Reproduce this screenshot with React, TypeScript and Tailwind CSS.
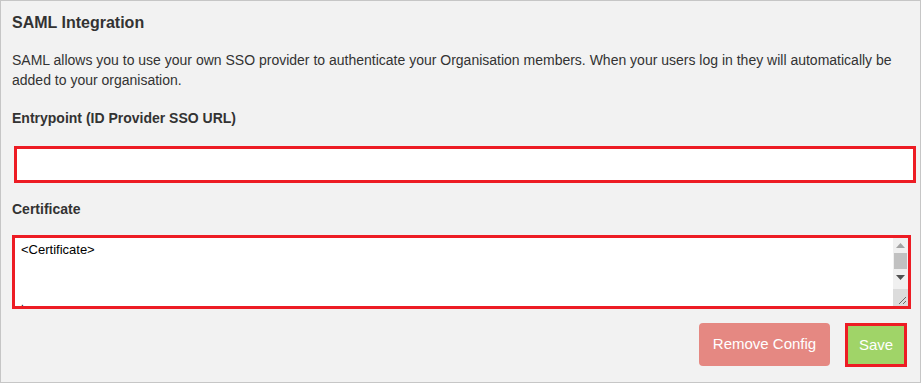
import React from "react";

function Scrollbar() {
  return (
    <div className="flex w-[15px] flex-col bg-[#f0f0f0]">
      <div className="flex h-[15px] items-center justify-center">
        <svg width="9" height="5" viewBox="0 0 9 5">
          <path d="M0 5 L4.5 0 L9 5 Z" fill="#a3a3a3" />
        </svg>
      </div>
      <div className="mx-[1px] h-[16px] bg-[#c1c1c1]" />
      <div className="flex h-[17px] items-center justify-center">
        <svg width="9" height="5" viewBox="0 0 9 5">
          <path d="M0 0 L9 0 L4.5 5 Z" fill="#505050" />
        </svg>
      </div>
      <div className="flex-1" />
      <div className="flex h-[17px] items-end justify-end bg-[#dcdcdc] p-[1px]">
        <svg width="10" height="10" viewBox="0 0 10 10">
          <path d="M9 2 L2 9 M9 6 L6 9" stroke="#6b6b6b" strokeWidth="1" />
        </svg>
      </div>
    </div>
  );
}

export default function App() {
  return (
    <div
      className="h-[384px] w-[922px] bg-white"
      style={{ fontFamily: '"Liberation Sans", Arial, sans-serif' }}
    >
      <div className="flex h-[383px] w-[921px] flex-col border border-[#c6c6c6] bg-[#f2f2f2] pl-[11px] pr-[12px] pt-[11px] text-[#333333]">
        <h2 className="text-[16px] font-bold leading-[22px]">SAML Integration</h2>
        <p className="mt-[16px] text-[14px] leading-[20px]">
          SAML allows you to use your own SSO provider to authenticate your Organisation members. When your users log in they
          will automatically be added to your organisation.
        </p>
        <label className="mt-[18px] text-[14px] font-bold leading-[20px]">Entrypoint (ID Provider SSO URL)</label>
        <div className="ml-[2px] mt-[18px] h-[37px] w-[902px] border-[3px] border-[#ed1c24] bg-white" />
        <label className="mt-[16px] text-[14px] font-bold leading-[20px]">Certificate</label>
        <div className="mt-[16px] flex h-[74px] w-[899px] border-[3px] border-[#ed1c24] bg-white">
          <div className="flex flex-1 flex-col justify-between pl-[6px] pt-[4px] text-[13px] leading-[16px] text-black">
            <span>&lt;Certificate&gt;</span>
            <span className="text-[10px] leading-[6px]">.</span>
          </div>
          <Scrollbar />
        </div>
        <div className="mt-[14px] flex items-start justify-end gap-[15px] pr-[1px]">
          <button className="h-[43px] w-[131px] rounded-[4px] bg-[#e58882] text-[15px] text-white">Remove Config</button>
          <button className="h-[44px] w-[62px] border-[3px] border-[#ed1c24] bg-[#a0d468] text-[15px] text-white">
            Save
          </button>
        </div>
      </div>
    </div>
  );
}
